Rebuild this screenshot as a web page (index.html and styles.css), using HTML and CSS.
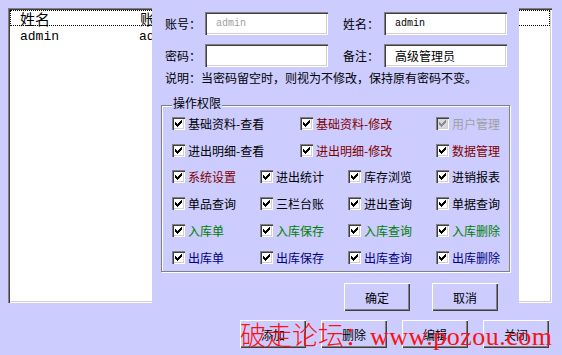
FILE: index.html
```html
<!DOCTYPE html>
<html lang="zh-CN">
<head>
<meta charset="UTF-8">
<title>用户管理</title>
<link rel="stylesheet" href="styles.css">
</head>
<body>
<svg class="defs" width="0" height="0">
    <symbol id="tick" viewBox="0 0 13 13">
        <path d="M3 5h1v3h-1zM4 6h1v3h-1zM5 7h1v3h-1zM6 6h1v3h-1zM7 5h1v3h-1zM8 4h1v3h-1zM9 3h1v3h-1z"/>
    </symbol>
</svg>
<div class="window">
    <div class="list">
        <div class="list-head">
            <span class="col-name">姓名</span>
            <span class="col-acct">账号</span>
        </div>
        <div class="list-row">
            <span class="col-name">admin</span>
            <span class="col-acct">admin</span>
        </div>
    </div>

    <div class="actions">
        <button class="btn">添加</button>
        <button class="btn">删除</button>
        <button class="btn">编辑</button>
        <button class="btn">关闭</button>
    </div>

    <div class="dialog">
        <div class="form-row">
            <label class="field"><span class="field-label">账号：</span><span class="input input-muted">admin</span></label>
            <label class="field"><span class="field-label">姓名：</span><span class="input input-mono">admin</span></label>
        </div>
        <div class="form-row">
            <label class="field"><span class="field-label">密码：</span><span class="input"></span></label>
            <label class="field"><span class="field-label">备注：</span><span class="input">高级管理员</span></label>
        </div>
        <p class="note">说明：当密码留空时，则视为不修改，保持原有密码不变。</p>

        <div class="group">
            <div class="group-title">操作权限</div>
            <div class="perm-row wide">
                <span class="perm"><span class="check"><svg><use href="#tick"/></svg></span>基础资料-查看</span>
                <span class="perm red"><span class="check"><svg><use href="#tick"/></svg></span>基础资料-修改</span>
                <span class="perm off"><span class="check"><svg><use href="#tick"/></svg></span>用户管理</span>
            </div>
            <div class="perm-row wide">
                <span class="perm"><span class="check"><svg><use href="#tick"/></svg></span>进出明细-查看</span>
                <span class="perm red"><span class="check"><svg><use href="#tick"/></svg></span>进出明细-修改</span>
                <span class="perm red"><span class="check"><svg><use href="#tick"/></svg></span>数据管理</span>
            </div>
            <div class="perm-row">
                <span class="perm red"><span class="check"><svg><use href="#tick"/></svg></span>系统设置</span>
                <span class="perm"><span class="check"><svg><use href="#tick"/></svg></span>进出统计</span>
                <span class="perm"><span class="check"><svg><use href="#tick"/></svg></span>库存浏览</span>
                <span class="perm"><span class="check"><svg><use href="#tick"/></svg></span>进销报表</span>
            </div>
            <div class="perm-row">
                <span class="perm"><span class="check"><svg><use href="#tick"/></svg></span>单品查询</span>
                <span class="perm"><span class="check"><svg><use href="#tick"/></svg></span>三栏台账</span>
                <span class="perm"><span class="check"><svg><use href="#tick"/></svg></span>进出查询</span>
                <span class="perm"><span class="check"><svg><use href="#tick"/></svg></span>单据查询</span>
            </div>
            <div class="perm-row">
                <span class="perm green"><span class="check"><svg><use href="#tick"/></svg></span>入库单</span>
                <span class="perm green"><span class="check"><svg><use href="#tick"/></svg></span>入库保存</span>
                <span class="perm green"><span class="check"><svg><use href="#tick"/></svg></span>入库查询</span>
                <span class="perm green"><span class="check"><svg><use href="#tick"/></svg></span>入库删除</span>
            </div>
            <div class="perm-row">
                <span class="perm navy"><span class="check"><svg><use href="#tick"/></svg></span>出库单</span>
                <span class="perm navy"><span class="check"><svg><use href="#tick"/></svg></span>出库保存</span>
                <span class="perm navy"><span class="check"><svg><use href="#tick"/></svg></span>出库查询</span>
                <span class="perm navy"><span class="check"><svg><use href="#tick"/></svg></span>出库删除</span>
            </div>
        </div>

        <div class="dialog-buttons">
            <button class="btn">确定</button>
            <button class="btn">取消</button>
        </div>
    </div>

    <div class="watermark"><span class="wm-cn">破走论坛：</span><span class="wm-url">www.pozou.com</span></div>
</div>
</body>
</html>
```

FILE: styles.css
```css
body {
    margin: 0;
    background-color: #ccf;
    font-family: "Noto Sans CJK SC", "Liberation Sans", sans-serif;
    font-size: 12px;
    color: #000;
}
.defs {
    position: absolute;
}
.window {
    position: relative;
    width: 562px;
    height: 355px;
    padding: 8px;
    box-sizing: border-box;
    overflow: hidden;
}

/* list behind the dialog */
.list {
    width: 544px;
    height: 295px;
    box-sizing: border-box;
    padding: 2px;
    background-color: #fff;
    box-shadow: inset 1px 1px #808080, inset 2px 2px #404040, inset -1px -1px #fff, inset -2px -2px #d4d0c8;
}
.list-head, .list-row {
    display: flex;
    height: 16px;
    line-height: 16px;
}
.list-head {
    box-sizing: border-box;
    border: 1px dotted #000;
    font-size: 15px;
}
.list-row {
    padding-top: 3px;
    font-family: "Liberation Mono", monospace;
    font-size: 13px;
}
.col-name {
    width: 129px;
    padding-left: 10px;
    box-sizing: border-box;
}
.list-head .col-name {
    padding-left: 9px;
}

.actions {
    display: flex;
    gap: 15px;
    margin: 17px 0 0 232px;
}
.btn {
    width: 66px;
    height: 28px;
    padding: 0;
    border: none;
    background-color: #ccf;
    font-family: "Noto Sans CJK SC", sans-serif;
    font-size: 12px;
    color: #000;
    box-shadow: inset 1px 1px #fff, inset -1px -1px #404040, inset -2px -2px #808080;
}

/* edit dialog */
.dialog {
    position: absolute;
    top: 0;
    left: 152px;
    width: 367px;
    height: 315px;
    padding-top: 12px;
    box-sizing: border-box;
    background-color: #ccf;
}
.form-row {
    display: flex;
    gap: 15px;
    padding-left: 13px;
    margin-bottom: 9px;
}
.field {
    display: flex;
    align-items: center;
}
.field-label {
    width: 40px;
}
.field + .field .field-label {
    width: 41px;
}
.input {
    width: 123px;
    height: 23px;
    box-sizing: border-box;
    padding-left: 11px;
    line-height: 23px;
    background-color: #fff;
    box-shadow: inset 1px 1px #808080, inset 2px 2px #404040, inset -1px -1px #fff, inset -2px -2px #d4d0c8;
}
.input-muted, .input-mono {
    font-family: "Liberation Mono", monospace;
    font-size: 10px;
}
.input-muted {
    color: #a0a0a0;
}
.note {
    margin: -6px 0 0 13px;
    line-height: 16px;
}

.group {
    width: 349px;
    height: 167px;
    margin: 19px 0 0 9px;
    box-sizing: border-box;
    border: 1px solid #808080;
    box-shadow: inset 1px 1px #fff, 1px 1px #fff;
}
.group-title {
    width: max-content;
    margin: -10px 0 0 10px;
    padding: 0 1px;
    line-height: 14px;
    background-color: #ccf;
}
.perm-row {
    display: flex;
    height: 26.8px;
    align-items: center;
    padding-left: 10px;
}
.perm {
    display: flex;
    align-items: center;
    width: 88px;
    flex: none;
}
.wide .perm:nth-child(1) {
    width: 128px;
}
.wide .perm:nth-child(2) {
    width: 136px;
}
.check {
    width: 13px;
    height: 13px;
    margin-right: 3px;
    background-color: #fff;
    box-shadow: inset 1px 1px #808080, inset 2px 2px #404040, inset -1px -1px #fff, inset -2px -2px #d4d0c8;
}
.check svg {
    display: block;
    width: 13px;
    height: 13px;
    fill: #000;
}
.red {
    color: #800000;
}
.green {
    color: #008000;
}
.navy {
    color: #000080;
}
.off {
    color: #a0a0a0;
}
.off .check {
    background-color: #d8d8e4;
}
.off .check svg {
    fill: #8c8c8c;
}

.dialog-buttons {
    display: flex;
    justify-content: flex-end;
    gap: 22px;
    margin-top: 11px;
    padding-right: 21px;
}

/* forum watermark stamped over the bottom */
.watermark {
    position: absolute;
    left: 240px;
    top: 314px;
    color: #ff1010;
    white-space: nowrap;
    line-height: 40px;
}
.wm-cn {
    font-family: "Noto Sans CJK SC", sans-serif;
    font-size: 26px;
    font-weight: 300;
}
.wm-url {
    font-family: "Liberation Serif", serif;
    font-size: 26px;
    letter-spacing: 0.5px;
}
```
